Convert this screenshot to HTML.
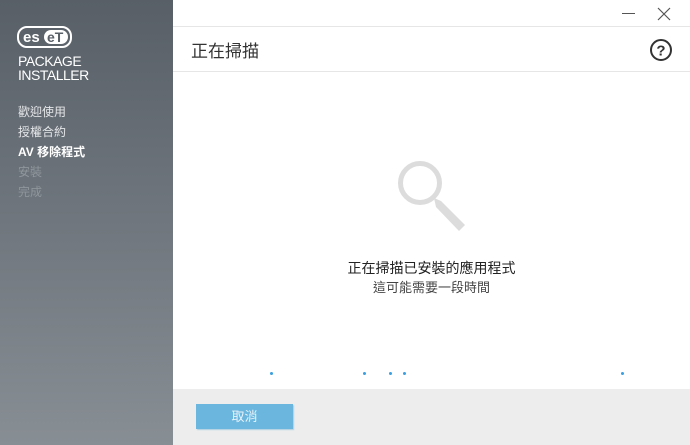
<!DOCTYPE html>
<html><head><meta charset="utf-8"><style>
*{margin:0;padding:0;box-sizing:border-box}
body{width:690px;height:445px;overflow:hidden;position:relative;font-family:"Liberation Sans","Noto Sans CJK TC",sans-serif;background:#fff}
#side{position:absolute;left:0;top:0;width:173px;height:445px;background:linear-gradient(#585f67,#878e94)}
.nav{position:absolute;left:18px;font-size:12px;color:#e4e6e8}
#main{position:absolute;left:173px;top:0;width:517px;height:445px}
.dot{position:absolute;top:372px;width:3px;height:3px;border-radius:50%;background:#3aa0e0}
</style></head><body>
<div id="side">
 <svg style="position:absolute;left:17px;top:26px" width="55" height="22" viewBox="0 0 55 22">
  <rect x="1" y="1" width="53" height="20" rx="9" fill="none" stroke="#fff" stroke-width="2"/>
  <text x="6" y="16" font-family="Liberation Sans" font-weight="bold" font-size="15" fill="#fff">es</text>
  <rect x="27" y="4" width="24" height="14" rx="7" fill="#fff"/>
  <text x="30" y="16" font-family="Liberation Sans" font-weight="bold" font-size="14" fill="#5a6068">eT</text>
 </svg>
 <div style="position:absolute;left:18px;top:54px;color:#fff;font-size:14px;line-height:14px;letter-spacing:-0.5px">PACKAGE<br>INSTALLER</div>
 <div class="nav" style="top:103px">歡迎使用</div>
 <div class="nav" style="top:123px">授權合約</div>
 <div class="nav" style="top:143px;font-weight:bold;color:#fff">AV 移除程式</div>
 <div class="nav" style="top:163px;color:#8f969c">安裝</div>
 <div class="nav" style="top:183px;color:#8f969c">完成</div>
</div>
<div id="main">
 <div style="position:absolute;left:449px;top:13px;width:13px;height:1px;background:#555"></div>
 <svg style="position:absolute;left:484px;top:7px" width="14" height="14"><path d="M1 1L13 13M13 1L1 13" stroke="#555" stroke-width="1.2"/></svg>
 <div style="position:absolute;left:0;top:26px;width:517px;height:1px;background:#e6e6e6"></div>
 <div style="position:absolute;left:18px;top:37px;font-size:17px;color:#333">正在掃描</div>
 <svg style="position:absolute;left:476px;top:38px" width="24" height="24"><circle cx="12" cy="12" r="10" fill="none" stroke="#333" stroke-width="2"/><text x="12" y="17.5" text-anchor="middle" font-family="Liberation Sans" font-weight="bold" font-size="15" fill="#333">?</text></svg>
 <div style="position:absolute;left:0;top:71px;width:517px;height:1px;background:#e6e6e6"></div>
 <svg style="position:absolute;left:222px;top:155px" width="80" height="80"><circle cx="25" cy="28" r="19.5" fill="none" stroke="#dcdcdc" stroke-width="5"/><path d="M39 43L46 46L70 70L64 76L41 52Z" fill="#dcdcdc"/></svg>
 <div style="position:absolute;left:0;width:517px;top:258px;text-align:center;font-size:14px;color:#222">正在掃描已安裝的應用程式</div>
 <div style="position:absolute;left:0;width:517px;top:277px;text-align:center;font-size:13px;color:#444">這可能需要一段時間</div>
 <div class="dot" style="left:97px"></div><div class="dot" style="left:190px"></div><div class="dot" style="left:216px"></div><div class="dot" style="left:230px"></div><div class="dot" style="left:448px"></div>
 <div style="position:absolute;left:0;top:389px;width:517px;height:56px;background:#ededed"></div>
 <div style="position:absolute;left:23px;top:404px;width:97px;height:25px;background:#6ab6de;box-shadow:1px 1px 1px #a9cfe2;color:#e8f3fa;font-size:13px;text-align:center;line-height:25px">取消</div>
</div>
</body></html>
